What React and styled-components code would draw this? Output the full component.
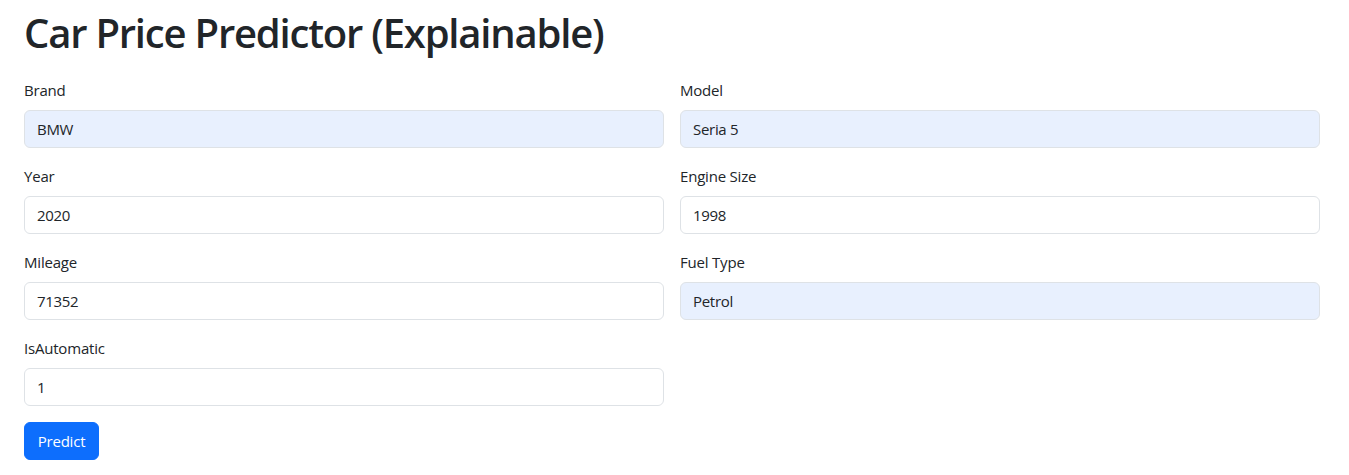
import styled, { createGlobalStyle } from "styled-components";

const fields = [
  { label: "Brand", value: "BMW", filled: true },
  { label: "Model", value: "Seria 5", filled: true },
  { label: "Year", value: "2020" },
  { label: "Engine Size", value: "1998" },
  { label: "Mileage", value: "71352" },
  { label: "Fuel Type", value: "Petrol", filled: true },
  { label: "IsAutomatic", value: "1" },
];

const Global = createGlobalStyle`
  * { box-sizing: border-box; }
  body {
    margin: 0;
    background: #fff;
    color: #212529;
    font-family: "Open Sans", "Noto Sans", "Liberation Sans", sans-serif;
    font-size: 16px;
    line-height: 1.5;
  }
`;

const Page = styled.div`padding: 9px 0 0 24px;`;
const Title = styled.h1`
  margin: 0 0 21px;
  font-size: 40px;
  font-weight: 600;
  line-height: 48px;
  letter-spacing: -1.2px;
  color: #212529;
`;
const Form = styled.form`width: 1296px;`;
const Grid = styled.div`
  display: grid;
  grid-template-columns: 1fr 1fr;
  column-gap: 16px;
  row-gap: 16px;
`;
const Field = styled.div`display: flex; flex-direction: column;`;
const Label = styled.label`
  margin-bottom: 8px;
  font-size: 15px;
  line-height: 24px;
  letter-spacing: -0.2px;
`;
const Input = styled.input`
  height: 38px;
  padding: 6px 12px;
  font: inherit;
  font-size: 15px;
  letter-spacing: -0.3px;
  color: #212529;
  background: ${(p) => (p.$filled ? "#e8f0fe" : "#fff")};
  border: 1px solid #dee2e6;
  border-radius: 6px;
  outline: none;
`;
const Button = styled.button`
  margin-top: 16px;
  height: 38px;
  width: 75px;
  padding: 0;
  font: inherit;
  font-size: 15px;
  letter-spacing: -0.2px;
  color: #fff;
  background: #0d6efd;
  border: 1px solid #0d6efd;
  border-radius: 6px;
`;

export default function App() {
  return (
    <Page>
      <Global />
      <Title>Car Price Predictor (Explainable)</Title>
      <Form onSubmit={(e) => e.preventDefault()}>
        <Grid>
          {fields.map((f) => (
            <Field key={f.label}>
              <Label>{f.label}</Label>
              <Input defaultValue={f.value} $filled={f.filled} />
            </Field>
          ))}
        </Grid>
        <Button type="submit">Predict</Button>
      </Form>
    </Page>
  );
}
